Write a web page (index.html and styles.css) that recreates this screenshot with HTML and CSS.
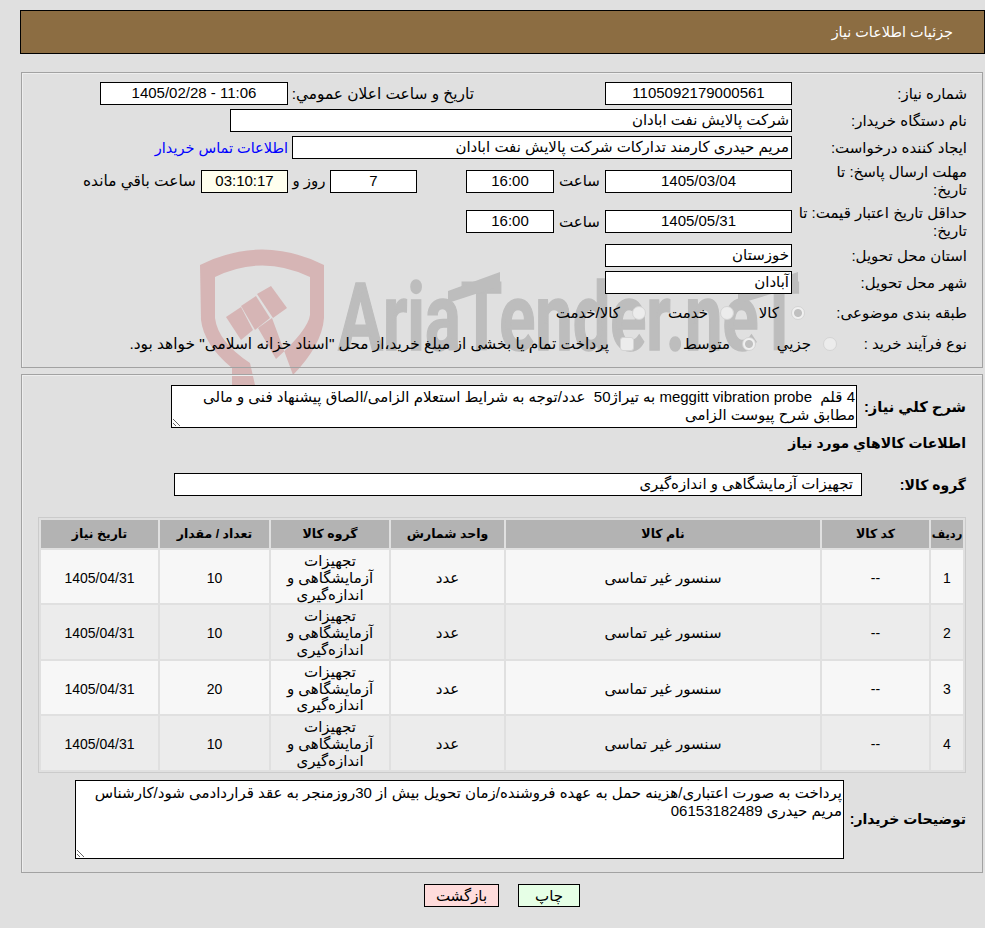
FILE: index.html
```html
<!DOCTYPE html>
<html lang="fa" dir="rtl">
<head>
<meta charset="utf-8">
<title>جزئیات اطلاعات نیاز</title>
<link rel="stylesheet" href="styles.css">
</head>
<body>
<svg class="watermark" viewBox="0 0 985 928" width="985" height="928" aria-hidden="true">
  <g class="wm-red">
    <path fill-rule="evenodd" d="M200 265Q262 234 324 265L324 318Q322 345 293 375L272 318 258 328 276 359Q308 330 310 315L310 277Q262 254 215 277L215 318Q218 342 250 363L255 385 232 385 232 368Q204 345 201 320Z"/>
    <path d="M226 317 241 307 253 330 241 340Z"/>
    <path d="M241 306 256 296 270 318 255 330Z"/>
    <path d="M257 294 271 286 287 308 273 318Z"/>
  </g>
  <text class="wm-text" x="338" y="350" textLength="462" lengthAdjust="spacingAndGlyphs" direction="ltr">AriaTender.neT</text>
  <path class="wm-gray" d="M448 291 500 272 500 286 448 303Z"/>
  <path class="wm-gray" d="M738 292 798 272 798 286 738 304Z"/>
</svg>

<header class="title-bar">جزئیات اطلاعات نیاز</header>

<section class="panel panel-top">
  <div class="row">
    <div class="label">شماره نیاز:</div>
    <div class="field w187 center">1105092179000561</div>
    <div class="mid-label wide">تاريخ و ساعت اعلان عمومي:</div>
    <div class="field w188 center">11:06 - 1405/02/28</div>
  </div>
  <div class="row">
    <div class="label">نام دستگاه خريدار:</div>
    <div class="field w562">شرکت پالایش نفت ابادان</div>
  </div>
  <div class="row">
    <div class="label">ایجاد کننده درخواست:</div>
    <div class="field w500">مریم حیدری کارمند تدارکات شرکت پالایش نفت ابادان</div>
    <a class="contact" href="#">اطلاعات تماس خریدار</a>
  </div>
  <div class="row">
    <div class="label">مهلت ارسال پاسخ: تا<br>تاریخ:</div>
    <div class="field w187 center">1405/03/04</div>
    <div class="unit w51">ساعت</div>
    <div class="field w88 center">16:00</div>
    <div class="field w87 center gap49">7</div>
    <div class="unit w42">روز و</div>
    <div class="field w87 center timer">03:10:17</div>
    <div class="after-timer wide">ساعت باقي مانده</div>
  </div>
  <div class="row row-tall">
    <div class="label">حداقل تاریخ اعتبار قیمت: تا<br>تاریخ:</div>
    <div class="field w187 center">1405/05/31</div>
    <div class="unit w51">ساعت</div>
    <div class="field w88 center">16:00</div>
  </div>
  <div class="row">
    <div class="label">استان محل تحویل:</div>
    <div class="field w187">خوزستان</div>
  </div>
  <div class="row">
    <div class="label">شهر محل تحویل:</div>
    <div class="field w187">آبادان</div>
  </div>
  <div class="row row-options">
    <div class="label">طبقه بندی موضوعی:</div>
    <div class="options options-kind">
      <span class="opt opt-kala"><input class="radio" type="radio" name="kind" checked disabled><span>کالا</span></span>
      <span class="opt opt-service"><input class="radio" type="radio" name="kind" disabled><span>خدمت</span></span>
      <span class="opt opt-both"><input class="radio" type="radio" name="kind" disabled><span>کالا/خدمت</span></span>
    </div>
  </div>
  <div class="row row-options2">
    <div class="label">نوع فرآیند خرید :</div>
    <div class="options options-type">
      <span class="opt opt-small"><input class="radio" type="radio" name="type" disabled><span>جزيي</span></span>
      <span class="opt opt-medium"><input class="radio" type="radio" name="type" checked disabled><span>متوسط</span></span>
      <span class="opt opt-pay"><input class="check" type="checkbox" disabled><span class="wide">پرداخت تمام یا بخشی از مبلغ خرید،از محل "اسناد خزانه اسلامی" خواهد بود.</span></span>
    </div>
  </div>
</section>

<section class="panel panel-main">
  <div class="desc-row">
    <div class="strong desc-label">شرح كلي نياز:</div>
    <textarea class="area area-desc" readonly>4 قلم  meggitt vibration probe به تیراژ50  عدد/توجه به شرایط استعلام الزامی/الصاق پیشنهاد فنی و مالی مطابق شرح پیوست الزامی</textarea>
  </div>
  <h2 class="strong goods-title">اطلاعات كالاهاي مورد نياز</h2>
  <div class="group-row">
    <div class="strong group-label">گروه كالا:</div>
    <div class="field group-field">تجهیزات آزمایشگاهی و اندازه‌گیری</div>
  </div>
  <table class="goods">
    <colgroup>
      <col class="c-row"><col class="c-code"><col class="c-name"><col class="c-unit"><col class="c-group"><col class="c-qty"><col class="c-date">
    </colgroup>
    <thead>
      <tr><th>رديف</th><th>کد کالا</th><th>نام کالا</th><th>واحد شمارش</th><th>گروه کالا</th><th>تعداد / مقدار</th><th>تاریخ نیاز</th></tr>
    </thead>
    <tbody>
      <tr><td class="num">1</td><td class="num">--</td><td>سنسور غیر تماسی</td><td>عدد</td><td>تجهیزات آزمایشگاهی و اندازه‌گیری</td><td class="num">10</td><td class="num">1405/04/31</td></tr>
      <tr><td class="num">2</td><td class="num">--</td><td>سنسور غیر تماسی</td><td>عدد</td><td>تجهیزات آزمایشگاهی و اندازه‌گیری</td><td class="num">10</td><td class="num">1405/04/31</td></tr>
      <tr><td class="num">3</td><td class="num">--</td><td>سنسور غیر تماسی</td><td>عدد</td><td>تجهیزات آزمایشگاهی و اندازه‌گیری</td><td class="num">20</td><td class="num">1405/04/31</td></tr>
      <tr><td class="num">4</td><td class="num">--</td><td>سنسور غیر تماسی</td><td>عدد</td><td>تجهیزات آزمایشگاهی و اندازه‌گیری</td><td class="num">10</td><td class="num">1405/04/31</td></tr>
    </tbody>
  </table>
  <div class="note-row">
    <div class="strong note-label">توضیحات خریدار:</div>
    <textarea class="area area-note" readonly>پرداخت به صورت اعتباری/هزینه حمل به عهده فروشنده/زمان تحویل بیش از 30روزمنجر به عقد قراردادمی شود/کارشناس مریم حیدری 06153182489</textarea>
  </div>
</section>

<div class="actions">
  <button class="btn btn-print" type="button">چاپ</button>
  <button class="btn btn-back" type="button">بازگشت</button>
</div>
</body>
</html>
```
FILE: styles.css
```css
* { box-sizing: border-box; }
html { background: #e0e0e0; }
body {
  margin: 0;
  width: 985px;
  height: 928px;
  overflow: hidden;
  background: transparent;
  font-family: "Liberation Sans", "DejaVu Sans", sans-serif;
  font-size: 15px;
  line-height: 18px;
  color: #000;
  direction: rtl;
}
.watermark { position: absolute; top: 0; left: 0; z-index: -1; }
.wm-red path { fill: #d6b5b5; }
.wm-text { font-family: Roboto, sans-serif; font-weight: 700; font-size: 95px; fill: #bdbdbd; stroke: #bdbdbd; stroke-width: 1.5px; }
.wm-gray { fill: #bdbdbd; }

.title-bar {
  width: 965px;
  height: 44px;
  margin: 10px 0 0 0;
  padding: 12px 31px 0 0;
  background: #8c6d42;
  border: 1px solid #000;
  color: #fff;
  font-size: 14.4px;
}

.panel {
  width: 962px;
  margin-right: 2px;
  border: 1px solid #a2a2a2;
  box-shadow: inset 1px 1px 0 #eee;
}
.panel-top {
  height: 296px;
  margin-top: 18px;
  padding: 9px 15px 0 0;
  display: flex;
  flex-direction: column;
  gap: 4px;
}
.panel-main { height: 499px; margin-top: 6px; padding: 10px 16px 0 0; }

.row { display: flex; align-items: center; min-height: 23px; }
.row-tall { min-height: 37px; }
.row-options { height: 30px; }
.row-options2 { height: 22px; }
.label { width: 175px; flex: none; white-space: nowrap; }
.wide { font-size: 15.4px; }
.field {
  height: 23px;
  flex: none;
  padding: 1px 2px 0 0;
  background: #fff;
  border: 1px solid #000;
  white-space: nowrap;
}
.center { text-align: center; padding-right: 0; }
.w187 { width: 187px; }
.w188 { width: 188px; }
.w562 { width: 562px; }
.w500 { width: 500px; }
.w88 { width: 88px; }
.w87 { width: 87px; }
.mid-label { width: 317px; flex: none; padding-right: 131px; white-space: nowrap; }
.contact { margin-right: 4px; color: #0000ff; text-decoration: none; white-space: nowrap; font-size: 14.5px; }
.unit { flex: none; text-align: center; white-space: nowrap; }
.w51 { width: 51px; }
.w42 { width: 42px; }
.gap49 { margin-right: 49px; }
.timer { background: #ffffee; }
.after-timer { margin-right: 5px; white-space: nowrap; }

.options { display: flex; align-items: center; }
.opt { display: flex; flex: none; align-items: center; white-space: nowrap; }
.radio, .check {
  appearance: none;
  flex: none;
  width: 14px;
  height: 14px;
  margin: 0 0 0 12px;
  background: #ececec;
  border: 1px solid #d4d4d4;
  border-radius: 50%;
}
.check { border-radius: 3px; margin-left: 11px; }
.radio:checked { background: radial-gradient(circle, #c0c0c0 0 3.5px, #f0f0f0 4.5px); }
.opt-kala { margin-right: -13px; width: 71px; }
.opt-service { width: 88px; }
.opt-small { margin-right: -45px; width: 81px; }
.opt-medium { width: 122px; }

.strong { font-weight: 700; font-size: 14px; margin: 0; }
.desc-row { display: flex; align-items: center; }
.desc-label { width: 109px; flex: none; font-size: 14.7px; }
.area {
  display: block;
  background: #fff;
  border: 1px solid #000;
  font: inherit;
  color: #000;
  padding: 2px 1px 0 10px;
  margin: 0;
  overflow: hidden;
  resize: both;
  outline: none;
}
.area-desc { width: 686px; height: 43px; }
.goods-title { margin-top: 6px; height: 18px; }
.group-row { display: flex; align-items: center; margin-top: 21px; }
.group-label { width: 104px; flex: none; }
.group-field { width: 688px; padding-right: 8px; }

.goods {
  width: 928px;
  margin: 21px 0 0 0;
  table-layout: fixed;
  border-collapse: separate;
  border-spacing: 2px;
  border: 1px solid #cbcbcb;
  line-height: 16.8px;
}
.c-row { width: 32px; }
.c-code { width: 107px; }
.c-name { width: 314px; }
.c-unit { width: 113px; }
.c-group { width: 118px; }
.c-qty { width: 109px; }
.c-date { width: 117px; }
.goods th {
  height: 28px;
  padding: 0;
  background: #b3b3b3;
  font-size: 12.5px;
  font-weight: 700;
  white-space: nowrap;
}
.goods th:first-child { font-size: 11.5px; }
.goods td {
  height: 53.4px;
  padding: 3px 6px 0;
  text-align: center;
  background: #f7f7f7;
  font-size: 15px;
}
.goods td.num { font-size: 14px; }
.goods tbody tr:nth-child(even) td { background: #ececec; }

.note-row { display: flex; align-items: center; margin-top: 7px; }
.note-label { width: 122px; flex: none; }
.area-note { width: 769px; height: 79px; padding-top: 3px; }

.actions { display: flex; justify-content: center; gap: 19px; margin-top: 11px; padding-left: 19px; }
.btn {
  height: 23px;
  padding: 0;
  border: 1px solid #000;
  font: inherit;
  color: #000;
}
.btn-back { width: 75px; background: #ffdcdc; }
.btn-print { width: 62px; background: #e6ffe6; }
```
